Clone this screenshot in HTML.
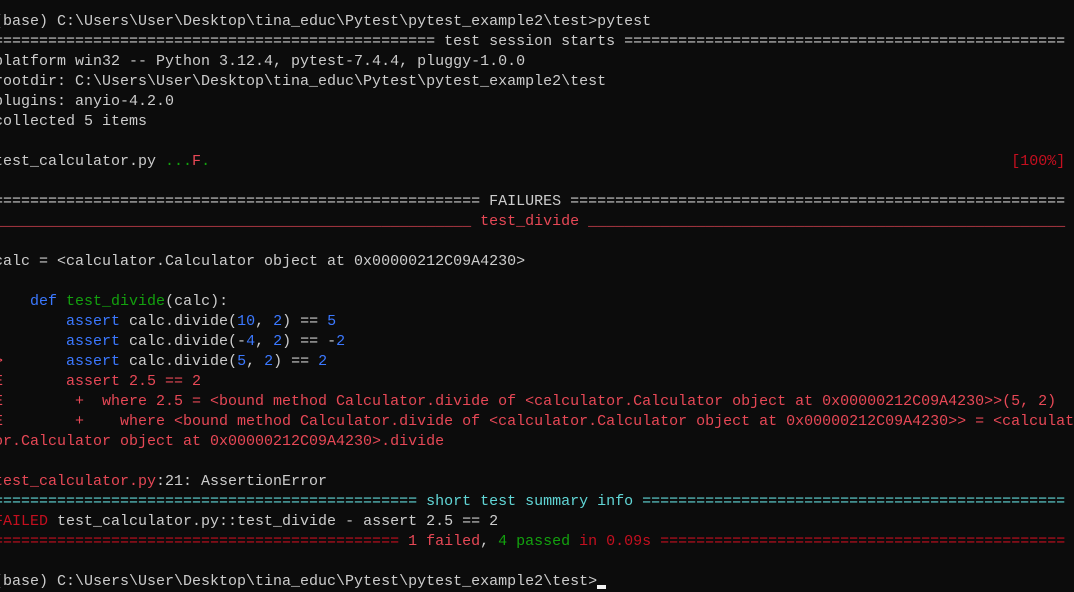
<!DOCTYPE html>
<html><head><meta charset="utf-8"><style>
html,body{margin:0;padding:0;background:#0c0c0c;width:1074px;height:592px;overflow:hidden}
pre{margin:0;position:absolute;left:-6px;top:12px;font-family:"Liberation Mono",monospace;font-size:15px;line-height:20px;color:#cccccc;white-space:pre}
.r{color:#e74856}.dr{color:#c50f1f}.g{color:#13a10e}.b{color:#3b78ff}.c{color:#61d6d6}
.cur{display:inline-block;width:9px;height:4px;background:#f2f2f2;vertical-align:-4px}
</style></head><body><pre>(base) C:\Users\User\Desktop\tina_educ\Pytest\pytest_example2\test&gt;pytest
================================================= test session starts =================================================
platform win32 -- Python 3.12.4, pytest-7.4.4, pluggy-1.0.0
rootdir: C:\Users\User\Desktop\tina_educ\Pytest\pytest_example2\test
plugins: anyio-4.2.0
collected 5 items

test_calculator.py <span class="g">...</span><span class="r">F</span><span class="g">.</span>                                                                                         <span class="dr">[100%]</span>

====================================================== FAILURES =======================================================
<span class="r">_____________________________________________________ test_divide _____________________________________________________</span>

calc = &lt;calculator.Calculator object at 0x00000212C09A4230&gt;

    <span class="b">def</span> <span class="g">test_divide</span>(calc):
        <span class="b">assert</span> calc.divide(<span class="b">10</span>, <span class="b">2</span>) == <span class="b">5</span>
        <span class="b">assert</span> calc.divide(-<span class="b">4</span>, <span class="b">2</span>) == -<span class="b">2</span>
<span class="r">&gt;</span>       <span class="b">assert</span> calc.divide(<span class="b">5</span>, <span class="b">2</span>) == <span class="b">2</span>
<span class="r">E       assert 2.5 == 2</span>
<span class="r">E        +  where 2.5 = &lt;bound method Calculator.divide of &lt;calculator.Calculator object at 0x00000212C09A4230&gt;&gt;(5, 2)</span>
<span class="r">E        +    where &lt;bound method Calculator.divide of &lt;calculator.Calculator object at 0x00000212C09A4230&gt;&gt; = &lt;calculat</span>
<span class="r">or.Calculator object at 0x00000212C09A4230&gt;.divide</span>

<span class="r">test_calculator.py</span>:21: AssertionError
<span class="c">=============================================== short test summary info ===============================================</span>
<span class="dr">FAILED</span> test_calculator.py::test_divide - assert 2.5 == 2
<span class="dr">============================================= </span><span class="r">1 failed</span>, <span class="g">4 passed</span><span class="dr"> in 0.09s =============================================</span>

(base) C:\Users\User\Desktop\tina_educ\Pytest\pytest_example2\test&gt;<span class="cur"></span></pre></body></html>
